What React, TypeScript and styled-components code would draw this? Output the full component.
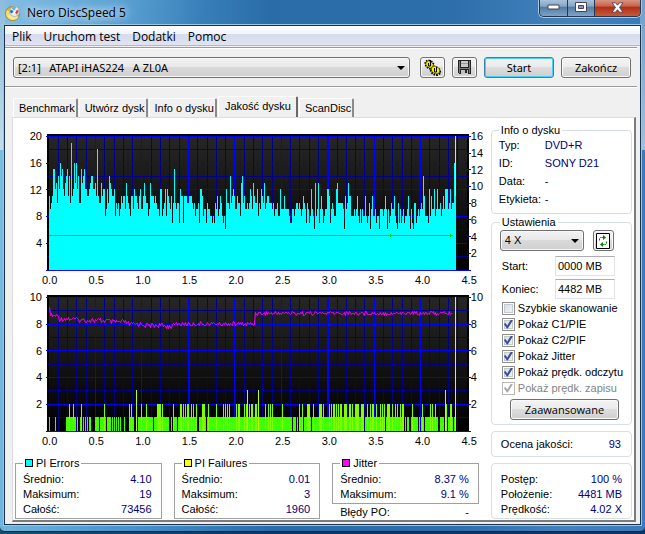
import React from 'react';
import styled, { createGlobalStyle } from 'styled-components';

const UI = '"Liberation Sans", Arial, sans-serif';
const SHELL = '"Noto Sans", "Open Sans", sans-serif';
const CAPTION = '"Open Sans", "Noto Sans", sans-serif';

const GlobalStyle = createGlobalStyle`
  * { box-sizing: border-box; }
  html, body { margin: 0; padding: 0; }
  body { font: 11px/15px ${UI}; color: #000; background: #0b3a66; }
  button, input, select { font: inherit; color: inherit; margin: 0; }
`;

/* ---------- window ---------- */

const Desktop = styled.div`
  min-height: 100vh;
  padding-bottom: 3px;
  background: linear-gradient(90deg, #14506c, #0b3a66 40%, #0c3560);
`;

const Frame = styled.div`
  padding: 0 4px 6px;
  border-bottom: 1px solid #16222e;
  border-radius: 0 0 5px 5px;
  background:
    linear-gradient(#8fbcdc, #c2dcec) left top / 5px 150px no-repeat,
    linear-gradient(#6f9fcb, #9fc0e0) right top / 5px 150px no-repeat,
    linear-gradient(100deg, rgba(255, 255, 255, 0.25), rgba(255, 255, 255, 0) 28%),
    linear-gradient(90deg, #5aa8da 0, #4694cc 20%, #2a6ca8 42%, #2d6faa 70%, #4482bc 88%, #3a7abb 100%);
`;

const TitleBar = styled.header`
  display: flex;
  align-items: center;
  gap: 6px;
  height: 25px;
  padding-left: 1px;
`;

const Title = styled.h1`
  margin: 0;
  padding: 0 6px 0 0;
  flex: 1;
  font: 12px/20px ${CAPTION};
  text-shadow: 0 0 6px #d8ecfa, 0 0 10px #c4e0f4, 0 0 14px #b0d4ee;
`;

const Captions = styled.div`
  display: flex;
  align-self: flex-start;
  height: 17px;
  border: 1px solid #26394f;
  border-top: 0;
  border-radius: 0 0 5px 5px;
  box-shadow: 0 0 0 1px #a9c6e2;
  overflow: hidden;
`;

const Caption = styled.button<{ $close?: boolean }>`
  display: grid;
  place-items: center;
  width: ${p => (p.$close ? 46 : 27)}px;
  padding: 0 0 2px;
  border: 0;
  & + & { border-left: 1px solid #26394f; }
  background: ${p => p.$close
    ? 'linear-gradient(#d99480 0, #c8604a 40%, #b02c16 42%, #c85a34 100%)'
    : 'linear-gradient(#a8c2dc 0, #86a6c6 40%, #54799f 42%, #7da3c8 100%)'};
`;

const Client = styled.main`
  display: flex;
  flex-direction: column;
  border: 1px solid #16324c;
  box-shadow: 0 0 0 1px #9cc6e4;
  background: #f0f0f0;
`;

const Menu = styled.nav`
  display: flex;
  gap: 12px;
  height: 20px;
  padding: 0 7px;
  border-bottom: 1px solid #b4b8cc;
  background: linear-gradient(#fff 0, #f2f4fa 40%, #d6dbed 42%, #dfe3f2 100%);
`;

const MenuItem = styled.button`
  padding: 0;
  border: 0;
  background: none;
  font: 12px/21px ${CAPTION};
`;

const Rule = styled.hr`
  height: 2px;
  margin: 1px 3px 0 0;
  border: 0;
  border-top: 1px solid #9a9a9a;
  background: #fff;
`;

const Toolbar = styled.div`
  display: flex;
  align-items: center;
  gap: 7px;
  height: 36px;
  padding: 0 9px 0 8px;
  font: 11px/15px ${SHELL};
`;

const SelectBox = styled.span<{ $grow?: boolean }>`
  position: relative;
  display: block;
  flex: ${p => (p.$grow ? '1' : '0 0 84px')};
  margin-right: ${p => (p.$grow ? '3px' : '0')};
  &::after {
    content: '';
    position: absolute;
    right: 5px;
    top: 9px;
    border: 4px solid transparent;
    border-top-color: #000;
    border-bottom: 0;
    pointer-events: none;
  }
`;

const Select = styled.select`
  appearance: none;
  display: block;
  width: 100%;
  height: 21px;
  padding: 0 4px;
  border: 1px solid #707070;
  border-radius: 3px;
  box-shadow: inset 0 0 0 1px #f8f8f8;
  background: linear-gradient(#f2f2f2 0, #e8e8e8 48%, #dadada 50%, #cfcfcf 100%);
`;

const Button = styled.button<{ $w: number; $default?: boolean }>`
  display: grid;
  place-items: center;
  flex: 0 0 ${p => p.$w}px;
  width: ${p => p.$w}px;
  height: 21px;
  padding: 0;
  border: 1px solid ${p => (p.$default ? '#3c7fb1' : '#707070')};
  border-radius: 3px;
  box-shadow: inset 0 0 0 1px ${p => (p.$default ? '#48d0f4' : '#fafafa')};
  background: linear-gradient(#f3f3f3 0, #ebebeb 48%, #dddddd 50%, #cfcfcf 100%);
`;

/* ---------- tabs ---------- */

const Tabs = styled.div`
  display: flex;
  align-items: flex-end;
  height: 29px;
  padding-left: 8px;
`;

const Tab = styled.button<{ $active?: boolean }>`
  height: ${p => (p.$active ? 21 : 19)}px;
  padding: ${p => (p.$active ? '0 5px 2px 6px' : '0 1px 0 5px')};
  margin-right: 1px;
  border: 0;
  border-top: 1px solid #fff;
  border-left: 1px solid #fff;
  border-right: 2px solid ${p => (p.$active ? '#696969' : '#8a8a8a')};
  border-radius: 2px 2px 0 0;
  background: #f0f0f0;
`;

const Page = styled.section`
  display: flex;
  gap: 5px;
  margin: 0 4px 2px 7px;
  padding: 12px 2px 1px 1px;
  border: 1px solid #dcdcdc;
  border-right: 2px solid #7c7c7c;
  border-bottom: 2px solid #7c7c7c;
  background: #fff;
`;

const Charts = styled.div`
  flex: 1;
  min-width: 0;
  display: flex;
  flex-direction: column;
`;

/* ---------- chart ---------- */

const ChartGrid = styled.figure`
  display: grid;
  grid-template-columns: 32px 1fr 15px;
  margin: 0 0 4px;
  padding-top: 4px;
`;

const Axis = styled.ol<{ $rows: number; $right?: boolean }>`
  display: grid;
  grid-template-rows: repeat(${p => p.$rows}, 1fr);
  height: 134px;
  margin: -5px ${p => (p.$right ? 0 : 4)}px 0 0;
  padding: 0;
  list-style: none;
  text-align: ${p => (p.$right ? 'left' : 'right')};
  line-height: 14px;
`;

const Plot = styled.svg`
  display: block;
  width: 100%;
  height: 137px;
`;

const XAxis = styled.ol`
  grid-column: 1 / -1;
  display: flex;
  justify-content: space-between;
  margin: 2px 9px 0 28px;
  padding: 0;
  list-style: none;
  line-height: 14px;
`;

const PI_ERRORS =
  'b9abffcdaecgefcbdefbeajbcgdgceaafdefccbbcdeeccdbibaadbcc89caedcbbc8a9a89babb9dba98bb9cbba9bc99bdbaa89dbbbab' +
  'a998cc89ac8cba9b7afa9aa7cbb7bbbaabbba9a899a7ccb8997a9988787a9b89ba878' +
  '6caa9eabcb99b' +
  'aa8deab99a9acb9dbaac8a9cbad9abbaaa9a899a88c999b99998779989aa9a989ba97a978c986d89d79b97899ccb79a98' +
  '8cdaaaaa96b9adbb888989b8797988b878a69b889788699989b96978a99b876a797897889b86976aa78989a9eb8887c8b99c89c99';

const PI_FAILURES =
  '1000001000000000011121112110100120101010110000111101111' +
  '2101111010101010100010000212110030111211112111111011122221211111100102111' +
  '0112212121221121211200111222101211111112111111212121211111121221' +
  '11121231212211221311111121121212111111111211111111101110102112011122210121111122212111112121221212122' +
  '11222112212112222112220112112122112111212120122211211212112122010110012111110101210111112121121100111103201122101011';

const SPAN = 407;
const X0 = 3;
const BASE = 135.5;

const errorSeries = PI_ERRORS.slice(0, SPAN - 10).padEnd(SPAN - 10, 'a89b9c8a') + 'cc9ac9aagg';

function barsPath(data: string, unit: number, match: (v: number) => boolean) {
  return data
    .slice(0, SPAN)
    .split('')
    .map((c, i) => [i, parseInt(c, 36)] as const)
    .filter(([, v]) => match(v))
    .map(([i, v]) => `M${X0 + i} 136V${Math.round(BASE - v * unit)}h1V136z`)
    .join('');
}

function jitterLevel(i: number) {
  if (i < 2) return 9.1 - i * 0.3;
  if (i < 10) return 8.6;
  if (i < 125) {
    const anchors = [8.4, 8.3, 8.25, 8.15, 8.0, 7.92, 7.85];
    return anchors[Math.min(6, Math.floor((i - 10) / 17))];
  }
  if (i < 206) return 8.02;
  return 8.82;
}

const jitterPath = Array.from({ length: 404 }, (_, i) => {
  const n = Math.sin(i * 12.9898) * 43758.5453;
  const noise = (n - Math.floor(n) - 0.5) * (i < 125 ? 5 : 4);
  return `${i ? 'L' : 'M'}${X0 + i + 0.5} ${Math.round(BASE - 13.35 * jitterLevel(i) + noise) + 0.5}`;
}).join('');

function Grid({ id, rightTicks }: { id: string; rightTicks: number }) {
  const rows = Array.from({ length: 11 }, (_, i) => i);
  const cols = Array.from({ length: 46 }, (_, i) => i);
  return (
    <>
      <defs>
        <linearGradient id={id} x1="0" y1="0" x2="0" y2="1">
          <stop offset="0" stopColor="#262626" />
          <stop offset="1" stopColor="#000" />
        </linearGradient>
      </defs>
      <path fill="#000" d="M1 0h422v137H1z" />
      <path fill={`url(#${id})`} d="M3 2h418v133H3z" />
      {cols.filter(i => i % 5).map(i => (
        <path key={i} fill="#00008c" d={`M${Math.round(2.6 + i * 9.29)} 2h1v134h-1z`} />
      ))}
      {rows.filter(i => i % 2).map(i => (
        <path key={i} fill="#00008c" d={`M1 ${Math.round(2 + i * 13.35)}h422v1H1z`} />
      ))}
      {cols.filter(i => i && i < 45 && i % 5 === 0).map(i => (
        <path key={i} fill="#0000ff" d={`M${Math.round(2.6 + i * 9.29)} 2h${i % 15 ? 1 : 2}v134h-${i % 15 ? 1 : 2}z`} />
      ))}
      {rows.filter(i => i % 2 === 0).map(i => (
        <path key={i} fill="#0000ff" d={`M0 ${Math.round(2 + i * 13.35)}h421v1H0z`} />
      ))}
      {Array.from({ length: rightTicks + 1 }, (_, i) => (
        <path key={i} fill="#0000ff" d={`M421 ${Math.round(2 + (i * 133.5) / rightTicks)}h4v1h-4z`} />
      ))}
    </>
  );
}

const TIMES = ['0.0', '0.5', '1.0', '1.5', '2.0', '2.5', '3.0', '3.5', '4.0', '4.5'];

function Chart(props: { label: string; left: number[]; right: number[]; children: React.ReactNode }) {
  return (
    <ChartGrid aria-label={props.label}>
      <Axis $rows={props.left.length}>{props.left.map(v => <li key={v}>{v}</li>)}</Axis>
      <Plot viewBox="0 0 425 137" preserveAspectRatio="none" shapeRendering="crispEdges">
        {props.children}
      </Plot>
      <Axis $right $rows={props.right.length}>{props.right.map(v => <li key={v}>{v}</li>)}</Axis>
      <XAxis>{TIMES.map(t => <li key={t}>{t}</li>)}</XAxis>
    </ChartGrid>
  );
}

/* ---------- statistics ---------- */

const StatsRow = styled.div`
  display: grid;
  grid-template-columns: 1fr 1fr 1fr;
  gap: 12px;
  align-items: start;
  padding: 4px 7px 0 1px;
`;

const StatBox = styled.fieldset`
  min-width: 0;
  margin: 0;
  padding: 2px 9px 1px 7px;
  border: 1px solid #a0a0a0;
`;

const StatLegend = styled.legend`
  display: flex;
  align-items: center;
  gap: 3px;
  padding: 0 2px;
  line-height: 14px;
`;

const Swatch = styled.i<{ $color: string }>`
  width: 8px;
  height: 8px;
  border: 1px solid #000;
  background: ${p => p.$color};
`;

const Pair = styled.div<{ $inset?: boolean }>`
  display: flex;
  justify-content: space-between;
  align-items: center;
  height: 15px;
  padding: ${p => (p.$inset ? '2px 10px 0 8px' : '0')};
`;

const Value = styled.output`
  color: #000080;
`;

const PairList = styled.div``;

function Stats({ name, color, rows }: { name: string; color: string; rows: [string, string][] }) {
  return (
    <StatBox>
      <StatLegend><Swatch $color={color} />{name}</StatLegend>
      {rows.map(([k, v]) => <Pair key={k}><span>{k}</span><Value>{v}</Value></Pair>)}
    </StatBox>
  );
}

/* ---------- side panel ---------- */

const Side = styled.aside`
  flex: 0 0 140px;
  display: flex;
  flex-direction: column;
  gap: 6px;
  margin-top: -2px;
`;

const Group = styled.fieldset<{ $pad: string; $titled?: boolean }>`
  min-width: 0;
  margin: ${p => (p.$titled ? '-5px' : '0')} 0 0;
  padding: ${p => p.$pad};
  border: 1px solid #d5dfe5;
  border-radius: 4px;
`;

const Legend = styled.legend`
  padding: 0 2px;
  line-height: 14px;
`;

const InfoList = styled.dl`
  display: grid;
  grid-template-columns: 46px 1fr;
  line-height: 18px;
  margin: -1px 0 0;
`;

const InfoValue = styled.dd`
  margin: 0;
  color: #000080;
`;

const SpeedRow = styled.div`
  display: flex;
  gap: 9px;
  margin-bottom: 5px;
`;

const Field = styled.label`
  display: flex;
  align-items: center;
  justify-content: space-between;
  height: 20px;
  margin: 0 8px 3px 2px;
`;

const TextBox = styled.input`
  width: 60px;
  height: 20px;
  padding: 0 2px;
  border: 1px solid #e2e3ea;
  border-top-color: #abadb3;
  background: #fff;
`;

const CheckList = styled.div`
  margin: -2px 0 3px 2px;
`;

const CheckLabel = styled.label<{ $off?: boolean }>`
  display: flex;
  align-items: center;
  gap: 3px;
  height: 16px;
  white-space: nowrap;
  color: ${p => (p.$off ? '#838383' : '#000')};
`;

const Check = styled.input`
  appearance: none;
  display: grid;
  place-items: center;
  flex: 0 0 13px;
  height: 13px;
  border: 1px solid #8e8f8f;
  box-shadow: inset 0 0 0 1px #fff, inset 0 0 0 2px #c4cad2;
  background: linear-gradient(135deg, #d4d8de, #f6f6f6);
  &:checked::before {
    content: '';
    width: 9px;
    height: 9px;
    background: #3c4f95;
    clip-path: polygon(0 50%, 18% 38%, 38% 66%, 80% 0, 100% 8%, 44% 100%, 34% 100%);
  }
  &:disabled { border-color: #b8b8b8; background: #fff; box-shadow: none; }
  &:disabled::before { background: #a8a8a8; }
`;

const ButtonRow = styled.div`
  display: flex;
  justify-content: flex-end;
  padding-right: 4px;
  font-family: ${CAPTION};
`;

const CHECKS = [
  { label: 'Szybkie skanowanie', on: false },
  { label: 'Pokaż C1/PIE', on: true },
  { label: 'Pokaż C2/PIF', on: true },
  { label: 'Pokaż Jitter', on: true },
  { label: 'Pokaż prędk. odczytu', on: true },
  { label: 'Pokaż prędk. zapisu', on: true, off: true },
];

/* ---------- icons ---------- */

const AppIcon = () => (
  <svg width="16" height="18" viewBox="0 0 16 18" aria-hidden="true">
    <circle cx="7.500" cy="9.500" r="7" fill="#dcb838" stroke="#a8861c" />
    <path d="M1.500 10a6.500 6.500 0 0 0 12 3L9 10z" fill="#f6e890" />
    <path d="M2 6a7 7 0 0 0 0 7l4-4z" fill="#f0dc70" />
    <circle cx="9.500" cy="7.500" r="5" fill="#e6edf4" stroke="#93a2b2" strokeWidth=".7" />
    <path d="M9.500 7.500 6.500 4A5 5 0 0 1 11 3z" fill="#59b7ee" />
    <path d="m9.500 7.500 4-2a5 5 0 0 1-2 5z" fill="#d44a34" />
    <path d="m9.500 7.500-3.500 2a4 4 0 0 1-.5-4z" fill="#3c66ba" />
    <circle cx="9.500" cy="7.500" r="1.200" fill="#fff" />
  </svg>
);

const GearsIcon = () => (
  <svg width="17" height="17" viewBox="0 0 17 17" aria-hidden="true">
    <ellipse cx="5.500" cy="5.500" rx="4.500" ry="3.500" fill="none" stroke="#000" strokeWidth="2" strokeDasharray="1.500 1" transform="rotate(40 5.500 5.500)" />
    <ellipse cx="11.500" cy="12" rx="4.500" ry="3.500" fill="none" stroke="#000" strokeWidth="2.500" strokeDasharray="1.500 1" transform="rotate(25 11.500 12)" />
    <ellipse cx="5.500" cy="5.500" rx="4.200" ry="3.200" fill="#e8e000" stroke="#000" strokeWidth=".5" transform="rotate(40 5.500 5.500)" />
    <ellipse cx="11.500" cy="11" rx="4.500" ry="3.500" fill="#f8f000" stroke="#000" strokeWidth=".5" transform="rotate(25 11.500 11)" />
    <path d="M4.500 4v3h2V1M10.500 9v4h2V8" fill="none" stroke="#000" strokeWidth="1" />
  </svg>
);

const FloppyIcon = () => (
  <svg width="13" height="14" viewBox="0 0 13 14" shapeRendering="crispEdges" aria-hidden="true">
    <path d="M0 0h13v14H1l-1-1z" fill="#222" />
    <path d="M1 1h1v12H1zM11 1h1v12h-1zM2 8h9v1H2z" fill="#787878" />
    <path d="M3 1h7v6H3z" fill="#c8c8c8" />
    <path d="M3 3h7v1H3z" fill="#9a9a9a" />
    <path d="M3 10h7v4H3z" fill="#c0c0c0" />
    <path d="M7 10h2v3H7z" fill="#222" />
  </svg>
);

const RefreshIcon = () => (
  <svg width="14" height="16" viewBox="0 0 14 16" aria-hidden="true">
    <path d="M.5.500h13v15H.5z" fill="#fff" stroke="#000" />
    <g fill="none" stroke="#008000">
      <path d="M3.500 7.500v-2l1-1H8" strokeDasharray="2 .5" />
      <path d="M10.500 8.500v2l-1 1H6" strokeDasharray="2 .5" />
    </g>
    <path d="m7 2 3 2.500L7 7zM7 9l-3 2.500L7 14z" fill="#008000" />
  </svg>
);

const MinIcon = () => (
  <svg width="13" height="6" viewBox="0 0 13 6" aria-hidden="true">
    <path d="M1 1h11v4H1z" fill="#fff" stroke="#445" />
  </svg>
);

const MaxIcon = () => (
  <svg width="12" height="10" viewBox="0 0 12 10" aria-hidden="true">
    <path d="M.5.500h11v9H.5z" fill="#fff" stroke="#445" />
    <path d="M3.500 3.500h5v3h-5z" fill="#7f9fc2" stroke="#445" />
  </svg>
);

const CloseIcon = () => (
  <svg width="13" height="11" viewBox="0 0 13 11" aria-hidden="true">
    <path d="M1 .8h3.500l2 2.400 2-2.400H12L8.500 5.500l3.500 4.700H8.500l-2-2.500-2 2.500H1l3.500-4.700z" fill="#fff" stroke="#445" strokeWidth=".9" />
  </svg>
);

/* ---------- app ---------- */

export default function App() {
  return (
    <Desktop>
      <GlobalStyle />
      <Frame>
        <TitleBar>
          <AppIcon />
          <Title>Nero DiscSpeed 5</Title>
          <Captions>
            <Caption aria-label="Minimalizuj"><MinIcon /></Caption>
            <Caption aria-label="Maksymalizuj"><MaxIcon /></Caption>
            <Caption $close aria-label="Zamknij"><CloseIcon /></Caption>
          </Captions>
        </TitleBar>
        <Client>
          <Menu>
            {['Plik', 'Uruchom test', 'Dodatki', 'Pomoc'].map(m => <MenuItem key={m}>{m}</MenuItem>)}
          </Menu>
          <Rule />
          <Toolbar>
            <SelectBox $grow>
              <Select aria-label="Napęd">
                <option>[2:1]&nbsp;&nbsp; ATAPI iHAS224&nbsp;&nbsp; A ZL0A</option>
              </Select>
            </SelectBox>
            <Button $w={25} aria-label="Opcje"><GearsIcon /></Button>
            <Button $w={25} aria-label="Zapisz"><FloppyIcon /></Button>
            <Button $w={70} $default>Start</Button>
            <Button $w={70}>Zakończ</Button>
          </Toolbar>
          <Rule />
          <Tabs role="tablist">
            {['Benchmark', 'Utwórz dysk', 'Info o dysku', 'Jakość dysku', 'ScanDisc'].map((t, i) => (
              <Tab key={t} role="tab" aria-selected={i === 3} $active={i === 3}>{t}</Tab>
            ))}
          </Tabs>
          <Page>
            <Charts>
              <Chart label="PI Errors" left={[20, 16, 12, 8, 4]} right={[16, 14, 12, 10, 8, 6, 4, 2]}>
                <Grid id="shade-errors" rightTicks={8} />
                <path fill="#00ffff" d={barsPath(errorSeries, 6.68, v => v > 0)} />
                <path fill="#d8d8d8" d="M409 2h1v60h-1z" />
                <path fill="#00ffff" d="M409 62h1v74h-1z" />
                <path fill="#00c800" d="M3 101h404v1H3zM344 100h1v3h-1zM404 100h1v3h-1z" />
              </Chart>
              <Chart label="PI Failures, Jitter" left={[10, 8, 6, 4, 2]} right={[10, 8, 6, 4, 2]}>
                <Grid id="shade-failures" rightTicks={5} />
                <path fill="#40ff00" d={barsPath(PI_FAILURES, 13.35, v => v === 1)} />
                <path fill="#80ff00" d={barsPath(PI_FAILURES, 13.35, v => v === 2)} />
                <path fill="#c0ff00" d={barsPath(PI_FAILURES, 13.35, v => v === 3)} />
                <path fill="none" stroke="#ff00ff" d={jitterPath} />
                <path fill="#d8d8d8" d="M409 2h1v134h-1z" />
              </Chart>
              <StatsRow>
                <Stats name="PI Errors" color="#00ffff" rows={[['Średnio:', '4.10'], ['Maksimum:', '19'], ['Całość:', '73456']]} />
                <Stats name="PI Failures" color="#ffff00" rows={[['Średnio:', '0.01'], ['Maksimum:', '3'], ['Całość:', '1960']]} />
                <PairList>
                  <Stats name="Jitter" color="#ff00ff" rows={[['Średnio:', '8.37 %'], ['Maksimum:', '9.1 %']]} />
                  <Pair $inset><span>Błędy PO:</span><Value>-</Value></Pair>
                </PairList>
              </StatsRow>
            </Charts>
            <Side>
              <Group $titled $pad="0 6px 5px 7px">
                <Legend>Info o dysku</Legend>
                <InfoList>
                  <dt>Typ:</dt><InfoValue>DVD+R</InfoValue>
                  <dt>ID:</dt><InfoValue>SONY D21</InfoValue>
                  <dt>Data:</dt><InfoValue>-</InfoValue>
                  <dt>Etykieta:</dt><InfoValue>-</InfoValue>
                </InfoList>
              </Group>
              <Group $titled $pad="1px 8px 4px">
                <Legend>Ustawienia</Legend>
                <SpeedRow>
                  <SelectBox><Select aria-label="Szybkość"><option>4 X</option></Select></SelectBox>
                  <Button $w={21} aria-label="Odśwież"><RefreshIcon /></Button>
                </SpeedRow>
                <Field>Start:<TextBox defaultValue="0000 MB" /></Field>
                <Field>Koniec:<TextBox defaultValue="4482 MB" /></Field>
                <CheckList>
                  {CHECKS.map(c => (
                    <CheckLabel key={c.label} $off={c.off}>
                      <Check type="checkbox" defaultChecked={c.on} disabled={c.off} />{c.label}
                    </CheckLabel>
                  ))}
                </CheckList>
                <ButtonRow><Button $w={109}>Zaawansowane</Button></ButtonRow>
              </Group>
              <Group $pad="5px 10px 4px 9px">
                <Pair><span>Ocena jakości:</span><Value>93</Value></Pair>
              </Group>
              <Group $pad="8px 9px 1px">
                <Pair><span>Postęp:</span><Value>100 %</Value></Pair>
                <Pair><span>Położenie:</span><Value>4481 MB</Value></Pair>
                <Pair><span>Prędkość:</span><Value>4.02 X</Value></Pair>
              </Group>
            </Side>
          </Page>
        </Client>
      </Frame>
    </Desktop>
  );
}
